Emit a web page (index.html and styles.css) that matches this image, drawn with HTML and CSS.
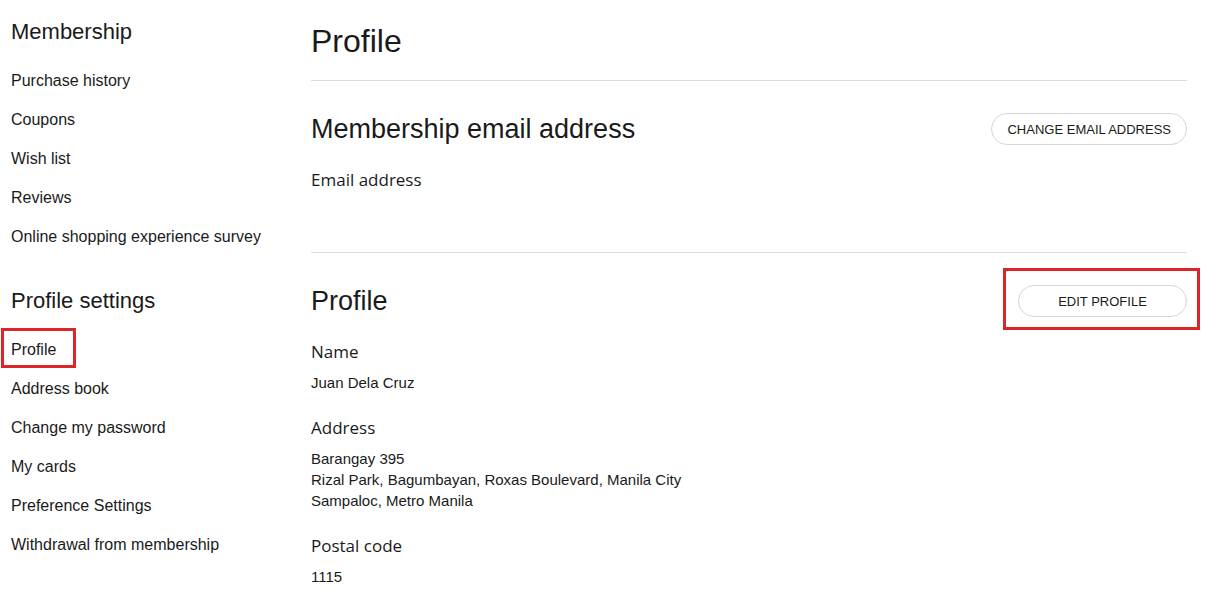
FILE: index.html
```html
<!DOCTYPE html>
<html lang="en">
<head>
  <meta charset="UTF-8" />
  <meta name="viewport" content="width=device-width, initial-scale=1.0" />
  <title>Profile</title>
  <link rel="stylesheet" href="styles.css">
</head>
<body>

  <div class="page">
    <aside class="sidebar">
      <h3>Membership</h3>
      <ul class="nav">
        <li><a href="#">Purchase history</a></li>
        <li><a href="#">Coupons</a></li>
        <li><a href="#">Wish list</a></li>
        <li><a href="#">Reviews</a></li>
        <li><a href="#">Online shopping experience survey</a></li>
      </ul>

      <h3>Profile settings</h3>
      <ul class="nav">
        <li class="marked"><a href="#">Profile</a></li>
        <li><a href="#">Address book</a></li>
        <li><a href="#">Change my password</a></li>
        <li><a href="#">My cards</a></li>
        <li><a href="#">Preference Settings</a></li>
        <li><a href="#">Withdrawal from membership</a></li>
      </ul>
    </aside>

    <main class="content">
      <h1>Profile</h1>

      <section class="block">
        <div class="block-head">
          <h2>Membership email address</h2>
          <button class="pill">CHANGE EMAIL ADDRESS</button>
        </div>
        <div class="field">
          <div class="label">Email address</div>
        </div>
      </section>

      <section class="block">
        <div class="block-head">
          <h2>Profile</h2>
          <div class="marked-btn">
            <button class="pill wide">EDIT PROFILE</button>
          </div>
        </div>
        <div class="field">
          <div class="label">Name</div>
          <div class="value">Juan Dela Cruz</div>
        </div>
        <div class="field">
          <div class="label">Address</div>
          <div class="value">Barangay 395<br>Rizal Park, Bagumbayan, Roxas Boulevard, Manila City<br>Sampaloc, Metro Manila</div>
        </div>
        <div class="field">
          <div class="label">Postal code</div>
          <div class="value">1115</div>
        </div>
      </section>
    </main>
  </div>

</body>
</html>
```

FILE: styles.css
```css
*,
*::before {
  box-sizing: border-box;
}

body {
  font-family: "Liberation Sans", Arial, sans-serif;
  margin: 0;
  background: #fff;
  color: #1a1a1a;
}

.page {
  display: flex;
  padding: 0 34px 0 11px;
}

/* Sidebar */
.sidebar {
  width: 300px;
  flex-shrink: 0;
  padding-top: 17px;
}

.sidebar h3 {
  margin: 0;
  font-size: 22px;
  font-weight: normal;
  line-height: 30px;
}

.nav {
  list-style: none;
  margin: 14px 0 30px;
  padding: 0;
}

.nav li {
  position: relative;
  font-size: 16px;
  line-height: 39px;
}

.nav a {
  color: #1a1a1a;
  text-decoration: none;
}

.nav li.marked::before {
  content: "";
  position: absolute;
  left: -10px;
  top: -2px;
  width: 75px;
  height: 40px;
  border: 3px solid #dd2427;
}

/* Main */
.content {
  flex: 1;
  padding-top: 21px;
}

.content h1 {
  margin: 0;
  font-size: 32px;
  font-weight: normal;
  line-height: 40px;
  padding-bottom: 19px;
  border-bottom: 1px solid #dcdcdc;
}

.block {
  padding: 32px 0 52px;
  border-bottom: 1px solid #dcdcdc;
}

.block:last-child {
  border-bottom: none;
  padding-bottom: 20px;
}

.block-head {
  display: flex;
  justify-content: space-between;
  align-items: center;
  height: 32px;
}

.block-head h2 {
  margin: 0;
  font-size: 27px;
  font-weight: normal;
}

.pill {
  height: 32px;
  padding: 0 15px;
  background: #fff;
  border: 1px solid #d6d6d6;
  border-radius: 16px;
  font-family: "Liberation Sans", Arial, sans-serif;
  font-size: 13px;
  color: #1a1a1a;
  cursor: pointer;
}

.pill.wide {
  width: 169px;
}

.marked-btn {
  position: relative;
}

.marked-btn::before {
  content: "";
  position: absolute;
  left: -15px;
  right: -13px;
  top: -17px;
  bottom: -13px;
  border: 3px solid #dd2427;
}

.field {
  margin-top: 23px;
}

.label {
  font-family: "Open Sans", "Noto Sans", sans-serif;
  font-size: 17px;
  line-height: 24px;
  margin-bottom: 8px;
}

.value {
  font-size: 15px;
  line-height: 21px;
}
```
